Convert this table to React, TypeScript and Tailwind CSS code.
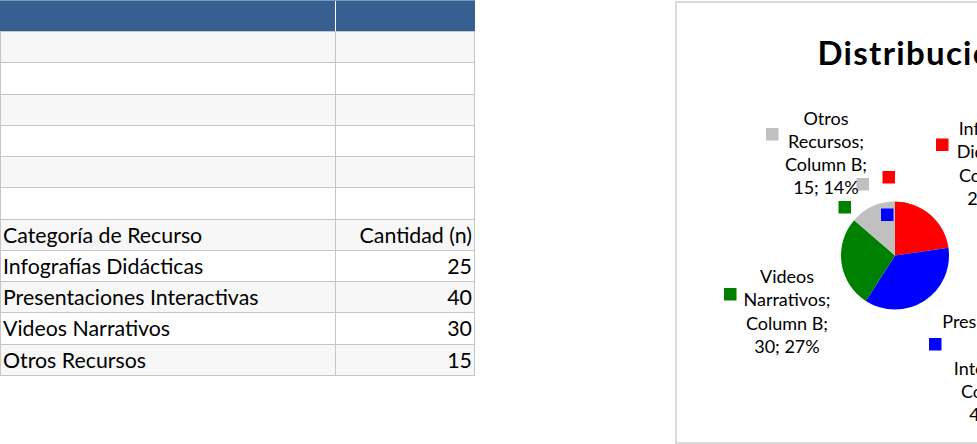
const rows: [string, string][] = [
  ["", ""],
  ["", ""],
  ["", ""],
  ["", ""],
  ["", ""],
  ["", ""],
  ["Categoría de Recurso", "Cantidad (n)"],
  ["Infografías Didácticas", "25"],
  ["Presentaciones Interactivas", "40"],
  ["Videos Narrativos", "30"],
  ["Otros Recursos", "15"],
];

const slices = [
  { value: 25, color: "#ff0000" },
  { value: 40, color: "#0000ff" },
  { value: 30, color: "#008000" },
  { value: 15, color: "#c0c0c0" },
];

const labels = [
  { x: 826, y: 124.5, lines: ["Otros", "Recursos;", "Column B;", "15; 14%"] },
  { x: 1000, y: 135, lines: ["Infografías", "Didácticas;", "Column B;", "25; 23%"] },
  { x: 787, y: 283, lines: ["Videos", "Narrativos;", "Column B;", "30; 27%"] },
  { x: 1002, y: 328, lines: ["Presentaciones", "", "Interactivas;", "Column B;", "40; 36%"] },
];

const markers = [
  { x: 766, y: 128, color: "#c0c0c0" },
  { x: 856.5, y: 178, color: "#c0c0c0" },
  { x: 936, y: 138.5, color: "#ff0000" },
  { x: 882.5, y: 171, color: "#ff0000" },
  { x: 838.5, y: 201, color: "#008000" },
  { x: 724, y: 288, color: "#008000" },
  { x: 881, y: 208.5, color: "#0000ff" },
  { x: 929, y: 338, color: "#0000ff" },
];

function Pie() {
  const cx = 895;
  const cy = 255.5;
  const r = 54;
  const total = slices.reduce((n, s) => n + s.value, 0);
  let acc = 0;
  const pt = (a: number) => [cx + r * Math.sin(a), cy - r * Math.cos(a)];
  return (
    <g>
      {slices.map((s) => {
        const a0 = (acc / total) * Math.PI * 2;
        acc += s.value;
        const a1 = (acc / total) * Math.PI * 2;
        const [x0, y0] = pt(a0);
        const [x1, y1] = pt(a1);
        const large = a1 - a0 > Math.PI ? 1 : 0;
        return (
          <path
            key={s.color}
            d={`M${cx} ${cy}L${x0} ${y0}A${r} ${r} 0 ${large} 1 ${x1} ${y1}Z`}
            fill={s.color}
          />
        );
      })}
    </g>
  );
}

export default function App() {
  return (
    <div className="flex h-[444px] w-[977px] overflow-hidden bg-white font-['Lato',sans-serif] text-black">
      <div className="w-[475px] shrink-0">
        <div className="flex h-[31px] border-t border-[#7f97b8]">
          <div className="w-[336px] border-r border-white bg-[#366092]" />
          <div className="w-[139px] bg-[#366092]" />
        </div>
        <div className="border-t border-[#c6c6c6]">
          {rows.map(([a, b], i) => (
            <div
              key={i}
              className={`flex h-[31.27px] border-b border-[#c6c6c6] text-[21.33px] leading-[30px] ${i % 2 === 0 ? "bg-[#f7f7f7]" : "bg-white"}`}
            >
              <div className="w-[336px] border-l border-r border-[#c6c6c6] pl-[2px] whitespace-nowrap">{a}</div>
              <div className="w-[139px] border-r border-[#c6c6c6] pr-[2px] text-right whitespace-nowrap">{b}</div>
            </div>
          ))}
        </div>
      </div>

      <div className="ml-[200px] mt-[1px] h-[443px] w-[600px] shrink-0 border-2 border-[#d9d9d9] bg-white">
        <svg width="596" height="439" viewBox="677 3 596 439" className="block">
          <text
            x="817.5"
            y="65"
            fontSize="33"
            fontWeight="700"
            letterSpacing="1.3"
            fontFamily="Lato, sans-serif"
            fill="#000"
          >
            Distribución de Recursos
          </text>
          <Pie />
          {markers.map((m, i) => (
            <rect key={i} x={m.x} y={m.y} width="12.5" height="12.5" fill={m.color} />
          ))}
          {labels.map((l) =>
            l.lines.map((t, j) => (
              <text
                key={`${l.x}-${j}`}
                x={l.x}
                y={l.y + j * 23.3}
                fontSize="18"
                fontFamily="Lato, sans-serif"
                textAnchor="middle"
                fill="#000"
              >
                {t}
              </text>
            ))
          )}
        </svg>
      </div>
    </div>
  );
}
